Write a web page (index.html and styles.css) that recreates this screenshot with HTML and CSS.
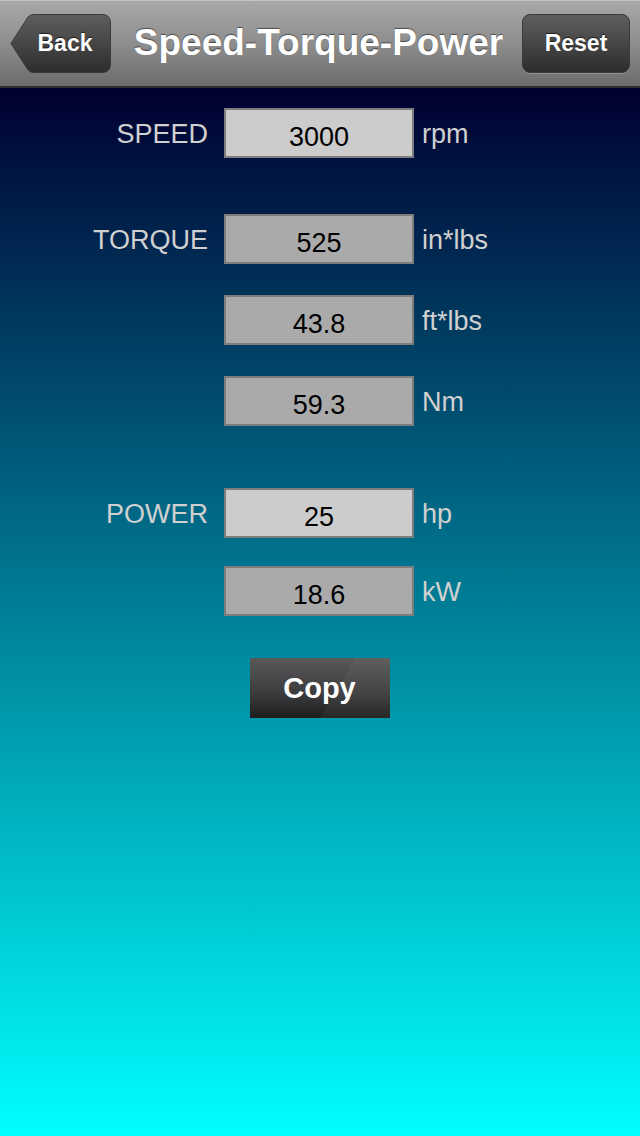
FILE: index.html
```
<!DOCTYPE html>
<html lang="en">
  <head>
    <meta charset="UTF-8" />
    <title>Speed-Torque-Power</title>
    <link rel="stylesheet" href="styles.css">
  </head>
  <body>
    <div id="navbar">
      <button class="navBtn back">
        <svg class="backShape" width="101" height="59" viewBox="0 0 101 59">
          <defs>
            <linearGradient id="btnGrad" x1="0" y1="0" x2="0" y2="1">
              <stop offset="0" stop-color="#5e5e5e" />
              <stop offset="0.5" stop-color="#464646" />
              <stop offset="1" stop-color="#2c2c2c" />
            </linearGradient>
          </defs>
          <path d="M1 29.5 L18 3 Q20 0.5 24 0.5 L92 0.5 Q100.5 0.5 100.5 9 L100.5 50 Q100.5 58.5 92 58.5 L24 58.5 Q20 58.5 18 56 Z"
                fill="url(#btnGrad)" stroke="#3a3a3a" stroke-width="1" />
        </svg>
        <span>Back</span>
      </button>
      <h1 id="title">Speed-Torque-Power</h1>
      <button class="navBtn reset"><span>Reset</span></button>
    </div>

    <div id="content">
      <div class="row speed">
        <label>SPEED</label>
        <div class="box edit">3000</div>
        <span class="unit">rpm</span>
      </div>

      <div class="row torque">
        <label>TORQUE</label>
        <div class="box">525</div>
        <span class="unit">in*lbs</span>
      </div>
      <div class="row near">
        <label></label>
        <div class="box">43.8</div>
        <span class="unit">ft*lbs</span>
      </div>
      <div class="row near">
        <label></label>
        <div class="box">59.3</div>
        <span class="unit">Nm</span>
      </div>

      <div class="row power">
        <label>POWER</label>
        <div class="box edit">25</div>
        <span class="unit">hp</span>
      </div>
      <div class="row near">
        <label></label>
        <div class="box">18.6</div>
        <span class="unit">kW</span>
      </div>

      <div class="copyWrap">
        <button id="copy">Copy</button>
      </div>
    </div>
  </body>
</html>
```
FILE: styles.css
```
html,
body {
  margin: 0;
  height: 100%;
}

body {
  font-family: "Liberation Sans", Arial, sans-serif;
  background: linear-gradient(to bottom, #000030 88px, #00ffff 100%);
  min-height: 1136px;
}

#navbar {
  height: 86px;
  border-bottom: 2px solid #2e2e2e;
  background: linear-gradient(to bottom, #a9a9a9 0%, #8e8e8e 50%, #6c6c6c 100%);
  box-shadow: inset 0 1px 0 #c4c4c4;
  display: flex;
  align-items: center;
  padding: 0 10px;
  box-sizing: content-box;
}

#title {
  flex: 1;
  margin: 0;
  text-align: center;
  color: #fff;
  font-size: 37px;
  font-weight: bold;
  text-shadow: 0 -1px 1px rgba(0, 0, 0, 0.5);
  padding-left: 4px;
  white-space: nowrap;
}

.navBtn {
  height: 59px;
  border: none;
  padding: 0;
  color: #fff;
  font-family: inherit;
  font-size: 23px;
  font-weight: bold;
  text-shadow: 0 -1px 1px rgba(0, 0, 0, 0.6);
  background: none;
  position: relative;
  flex-shrink: 0;
}

.back {
  width: 101px;
  margin-top: 1px;
}

.backShape {
  position: absolute;
  left: 0;
  top: 0;
}

.back span {
  position: relative;
  padding-left: 9px;
}

.reset {
  width: 108px;
  margin-top: 1px;
  border: 1px solid #3a3a3a;
  border-radius: 8px;
  background: linear-gradient(to bottom, #5e5e5e 0%, #464646 50%, #2c2c2c 100%);
  box-shadow: 0 1px 0 rgba(255, 255, 255, 0.2);
}

#content {
  padding-top: 20px;
}

.row {
  display: flex;
  align-items: center;
  height: 50px;
}

.row label {
  width: 208px;
  text-align: right;
  color: #d0d0d0;
  font-size: 27px;
  margin-right: 16px;
  padding-top: 2px;
}

.torque {
  margin-top: 56px;
}

.near {
  margin-top: 31px;
}

.power {
  margin-top: 62px;
}

.power + .near {
  margin-top: 28px;
}

.box {
  width: 186px;
  height: 46px;
  border: 2px solid #7d7d7d;
  background: #aaaaaa;
  color: #000;
  font-size: 27px;
  text-align: center;
  line-height: 54px;
  overflow: hidden;
}

.box.edit {
  background: #cccccc;
}

.unit {
  margin-left: 8px;
  color: #d0d0d0;
  font-size: 27px;
  padding-top: 2px;
}

.copyWrap {
  display: flex;
  justify-content: center;
  margin-top: 42px;
  padding-right: 1px;
}

#copy {
  width: 140px;
  height: 60px;
  border: none;
  color: #fff;
  font-family: inherit;
  font-size: 29px;
  font-weight: bold;
  background:
    linear-gradient(120deg, rgba(255, 255, 255, 0) 60%, rgba(255, 255, 255, 0.04) 60%),
    linear-gradient(to bottom, #58585a 0%, #3e3e40 55%, #1e1e20 100%);
}
```
